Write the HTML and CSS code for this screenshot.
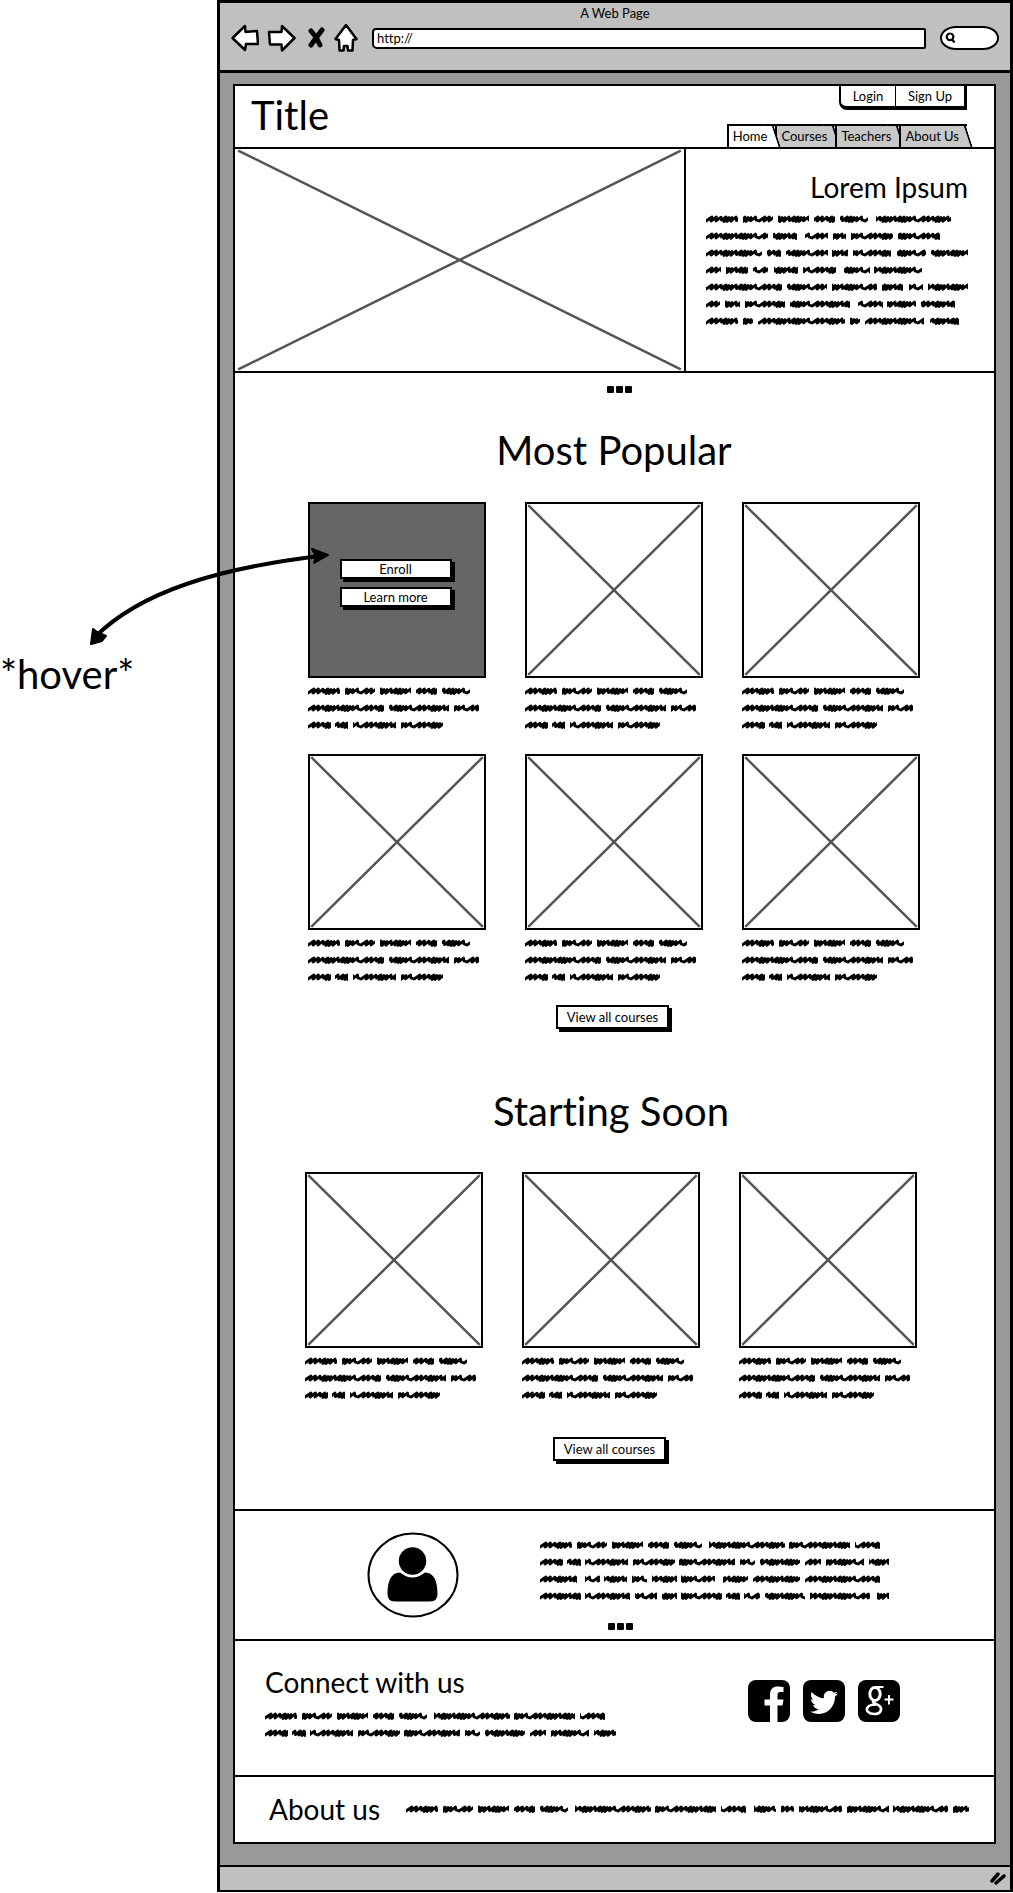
FILE: index.html
```html
<!DOCTYPE html>
<html lang="en">
<head>
<meta charset="utf-8">
<title>A Web Page</title>
<link rel="stylesheet" href="styles.css">
</head>
<body>
<svg class="sprite" width="0" height="0" aria-hidden="true">
  <defs>
    <pattern id="scribble" width="53" height="17" patternUnits="userSpaceOnUse">
      <path d="M-3 5L0 6L6 2L5 6L10.500 2L10 6L15 2.200L15.500 5L20 2L18 6.500L23 2.500L21 6.500L26 2.500L25 6.300L30 2L30.500 5.500L35.500 2L34 6L39 2L37 6.500L42 2.500L40 6.500L45 2.500L44.500 5.800L49.500 2L50 5L53 6L59 2" fill="none" stroke="#000" stroke-width="2.800" stroke-linejoin="round"/>
    </pattern>
    <symbol id="cross" viewBox="0 0 100 100" preserveAspectRatio="none">
      <path d="M0.700 0.700L99.300 99.300M99.300 0.700L0.700 99.300" stroke="#555" stroke-width="2.500" vector-effect="non-scaling-stroke"/>
    </symbol>
    <symbol id="card-text" viewBox="0 0 178 42">
      <path class="ink" d="M0 4h32M37 4h30M72 4h31M108 4h21M134 4h28M0 21h76M81 21h60M146 21h25M0 38h23M27 38h13M45 38h43M93 38h42"/>
    </symbol>
    <symbol id="dots" viewBox="0 0 26 8">
      <path d="M1 1h5v5h-5zM10 1h5v5h-5zM19 1h5v5h-5z" fill="#000" stroke="#000" stroke-width="2" stroke-linejoin="round"/>
    </symbol>
  </defs>
</svg>

<div class="board">
  <aside class="note">*hover*</aside>

  <div class="window">
    <div class="chrome">
      <div class="chrome-title">A Web Page</div>
      <div class="toolbar">
        <div class="nav-buttons">
          <button class="tool" aria-label="Back"><svg width="28" height="28" viewBox="0 0 28 28"><path d="M1.500 14L14 2L14.500 8L26 7L27 20L15 20L14 26Z"/></svg></button>
          <button class="tool" aria-label="Forward"><svg width="29" height="28" viewBox="0 0 29 28"><path d="M27.500 14L15 2L14.500 8L2 8L3 20.500L14.500 20.500L15 26.500Z"/></svg></button>
          <button class="tool" aria-label="Stop"><svg width="22" height="22" viewBox="0 0 22 22"><path class="thick" d="M7 4L12 10L16 18M18 3L12 11L7 18"/></svg></button>
          <button class="tool" aria-label="Home page"><svg width="24" height="30" viewBox="0 0 24 30"><path d="M12 2L1.500 16L5 17L5.500 27.500L9.500 27.500L10 23L13.500 23L14 27.500L18.500 27.500L19 17L22.500 16Z"/></svg></button>
        </div>
        <input class="address" type="text" value="http://" aria-label="Address">
        <label class="search">
          <svg width="11" height="12" viewBox="0 0 11 12" aria-hidden="true"><path d="M5 1.500a3.300 3.300 0 1 0 .1 0M7 7.500L9.500 10.500" fill="none" stroke="#000" stroke-width="2.200"/></svg>
          <input type="text" aria-label="Search">
        </label>
      </div>
    </div>

    <div class="viewport">
      <div class="page">
        <header class="site-header">
          <h1>Title</h1>
          <div class="header-side">
            <div class="account">
              <button>Login</button><button>Sign Up</button>
            </div>
            <nav class="tabs">
              <a class="tab current" href="#">Home</a>
              <a class="tab" href="#">Courses</a>
              <a class="tab" href="#">Teachers</a>
              <a class="tab" href="#">About Us</a>
            </nav>
          </div>
        </header>

        <section class="hero">
          <svg class="hero-image" role="img" aria-label="Image placeholder"><use href="#cross"/></svg>
          <div class="hero-text">
            <h3>Lorem Ipsum</h3>
            <svg width="262" height="110" viewBox="0 0 262 110" aria-hidden="true">
              <path class="ink" d="M0 4h32M37 4h30M72 4h31M108 4h21M134 4h28M170 4h75M0 21h62M67 21h24M99 21h23M127 21h13M145 21h42M192 21h42M0 38h56M61 38h14M80 38h42M126 38h16M147 38h38M191 38h29M225 38h37M0 55h15M20 55h22M47 55h15M68 55h24M97 55h33M138 55h26M168 55h48M0 72h76M81 72h40M126 72h45M176 72h21M203 72h14M222 72h40M0 89h14M19 89h15M39 89h40M84 89h60M152 89h25M181 89h29M215 89h34M0 106h32M37 106h10M52 106h87M144 106h10M159 106h59M224 106h29"/>
            </svg>
          </div>
        </section>

        <section class="courses">
          <svg class="dots" width="26" height="8" aria-hidden="true"><use href="#dots"/></svg>
          <h2>Most Popular</h2>
          <div class="grid">
            <article class="card">
              <div class="thumb active">
                <button class="button">Enroll</button>
                <button class="button">Learn more</button>
              </div>
              <svg width="178" height="42"><use href="#card-text"/></svg>
            </article>
            <article class="card"><svg class="thumb"><use href="#cross"/></svg><svg width="178" height="42"><use href="#card-text"/></svg></article>
            <article class="card"><svg class="thumb"><use href="#cross"/></svg><svg width="178" height="42"><use href="#card-text"/></svg></article>
            <article class="card"><svg class="thumb"><use href="#cross"/></svg><svg width="178" height="42"><use href="#card-text"/></svg></article>
            <article class="card"><svg class="thumb"><use href="#cross"/></svg><svg width="178" height="42"><use href="#card-text"/></svg></article>
            <article class="card"><svg class="thumb"><use href="#cross"/></svg><svg width="178" height="42"><use href="#card-text"/></svg></article>
          </div>
          <button class="button">View all courses</button>
        </section>

        <section class="courses soon">
          <h2>Starting Soon</h2>
          <div class="grid">
            <article class="card"><svg class="thumb"><use href="#cross"/></svg><svg width="178" height="42"><use href="#card-text"/></svg></article>
            <article class="card"><svg class="thumb"><use href="#cross"/></svg><svg width="178" height="42"><use href="#card-text"/></svg></article>
            <article class="card"><svg class="thumb"><use href="#cross"/></svg><svg width="178" height="42"><use href="#card-text"/></svg></article>
          </div>
          <button class="button">View all courses</button>
        </section>

        <section class="quote">
          <div class="quote-body">
            <svg width="92" height="86" viewBox="0 0 92 86" role="img" aria-label="User">
              <ellipse cx="46" cy="43" rx="44.500" ry="41.500" fill="#fff" stroke="#000" stroke-width="2"/>
              <circle cx="45.500" cy="29" r="13.700"/>
              <path d="M33 40.500C37 43.500 41 45.500 45.500 45.500S54 43.500 58 40.500C67 40.500 70.500 49 70.500 62Q70.500 69.500 63 69.500H28Q20.500 69.500 20.500 62C20.500 49 24 40.500 33 40.500Z"/>
            </svg>
            <svg class="quote-text" width="349" height="59" viewBox="0 0 349 59" aria-hidden="true">
              <path class="ink" d="M0 4h32M37 4h30M72 4h31M108 4h21M134 4h28M169 4h76M249 4h61M315 4h25M0 21h23M27 21h14M45 21h43M93 21h42M139 21h56M200 21h15M220 21h40M265 21h16M286 21h38M329 21h20M0 38h37M45 38h15M64 38h23M92 38h15M112 38h25M141 38h34M183 38h25M213 38h47M265 38h75M0 55h41M45 55h45M95 55h22M122 55h15M141 55h41M186 55h14M204 55h16M225 55h40M270 55h60M337 55h12"/>
            </svg>
          </div>
          <svg class="dots" width="26" height="8" aria-hidden="true"><use href="#dots"/></svg>
        </section>

        <section class="connect">
          <div>
            <h3>Connect with us</h3>
            <svg width="351" height="25" viewBox="0 0 351 25" aria-hidden="true">
              <path class="ink" d="M0 4h32M37 4h30M72 4h31M108 4h21M134 4h28M169 4h76M249 4h61M315 4h25M0 21h23M27 21h14M45 21h43M93 21h42M139 21h56M200 21h15M220 21h40M265 21h16M286 21h38M329 21h22"/>
            </svg>
          </div>
          <div class="social">
            <a href="#" aria-label="Facebook"><svg width="42" height="42" viewBox="0 0 42 42"><rect width="42" height="42" rx="8"/><path fill="#fff" d="M22 42V25.500H16.500V19.500H22V15C22 9 25 6.500 30 6.500C32 6.500 34 6.700 35.500 7V12H32.500C30 12 29.500 13.500 29.500 15.500V19.500H35.500L34.500 25.500H29.500V42Z"/></svg></a>
            <a href="#" aria-label="Twitter"><svg width="42" height="42" viewBox="0 0 42 42"><rect width="42" height="42" rx="8"/><path fill="#fff" d="M35 13.500C34 14 33 14.200 32 14.300C33 13.700 33.800 12.700 34.200 11.500C33.200 12.100 32.200 12.500 31 12.700A5.900 5.900 0 0 0 21 18.200C16 18 11.700 15.600 8.800 12C7.300 14.700 8 18 10.700 19.800C9.700 19.800 8.800 19.500 8 19.100C8 22 10 24.400 12.800 25C11.900 25.200 11 25.200 10.100 25.100C10.900 27.500 13 29.100 15.600 29.200C13.200 31 10 32 7 31.600C9.600 33.200 12.500 34 15.700 34C26 34 32.200 25.200 32 16.500C33.200 15.700 34.200 14.700 35 13.500Z"/></svg></a>
            <a href="#" aria-label="Google Plus"><svg width="42" height="42" viewBox="0 0 42 42"><rect width="42" height="42" rx="8"/><g fill="none" stroke="#fff"><ellipse cx="17" cy="14" rx="5.200" ry="6.500" stroke-width="3"/><path d="M18 7H25.500" stroke-width="2"/><path d="M15.500 20.500C13.500 23 18 23.500 21 25.500C25 28.500 23 34 16.500 34C10.500 34 7.500 30.500 9.500 27.500C11 25 15 24.500 18 24.500" stroke-width="2.600"/><path d="M26.500 19.500H35.500M31 15V24.500" stroke-width="2"/></g></svg></a>
          </div>
        </section>

        <footer class="about">
          <h3>About us</h3>
          <svg width="563" height="8" viewBox="0 0 563 8" aria-hidden="true">
            <path class="ink" d="M0 4h32M37 4h30M72 4h31M108 4h21M134 4h28M169 4h76M249 4h61M315 4h25M348 4h22M375 4h13M393 4h43M441 4h42M487 4h55M547 4h16"/>
          </svg>
        </footer>
      </div>
    </div>

    <div class="status">
      <svg width="17" height="15" viewBox="0 0 17 15" aria-hidden="true"><path d="M2 10L8 3M6 12L14 5" stroke="#000" stroke-width="3.500" stroke-linecap="round"/></svg>
    </div>
  </div>

  <svg class="arrow" width="250" height="100" viewBox="0 0 250 100" aria-hidden="true">
    <path d="M15 89C61 43 140 20 240 8" fill="none" stroke="#000" stroke-width="4"/>
    <path d="M11 96L13 81L17 84L26 88L22 93ZM248 7L232 1L236 8L234 15Z" stroke="#000" stroke-width="2" stroke-linejoin="round"/>
  </svg>
</div>
</body>
</html>
```
FILE: styles.css
```css
* {
  box-sizing: border-box;
}

body {
  margin: 0;
  background: #fff;
  color: #000;
  font-family: Lato, "Open Sans", sans-serif;
  font-size: 13px;
  font-variant-ligatures: none;
  line-height: 20px;
}

button,
input {
  margin: 0;
  padding: 0;
  border: 0;
  background: none;
  color: inherit;
  font: inherit;
}

a {
  color: inherit;
  text-decoration: none;
}

svg {
  display: block;
}

h1,
h2,
h3 {
  margin: 0;
  font-weight: 400;
}

h1,
h2,
.note {
  font-size: 40px;
  line-height: 48px;
}

h3 {
  font-size: 28px;
  line-height: 32px;
}

.sprite {
  position: absolute;
}

.ink {
  fill: none;
  stroke: url(#scribble);
  stroke-width: 8px;
}

.board {
  position: relative;
  display: grid;
  grid-template-columns: 217px 1fr;
  padding-bottom: 2px;
}

.note {
  padding-top: 650px;
}

.arrow {
  position: absolute;
  top: 548px;
  left: 80px;
}

.window {
  border: 3px solid #000;
  border-bottom-width: 2px;
  background: #999;
}

/* Browser chrome */
.chrome {
  padding-bottom: 17px;
  border-bottom: 3px solid #000;
  background: #c0c0c0;
}

.chrome-title {
  text-align: center;
}

.toolbar {
  display: flex;
  align-items: center;
  gap: 14px;
  height: 30px;
  padding: 0 11px;
}

.nav-buttons {
  display: flex;
  align-items: center;
  gap: 8px;
}

.tool svg {
  fill: #fff;
  stroke: #000;
  stroke-width: 2.5px;
  stroke-linejoin: round;
  stroke-linecap: round;
}

.tool .thick {
  fill: none;
  stroke-width: 5px;
}

.address {
  flex: 1;
  min-width: 0;
  height: 21px;
  padding: 0 3px;
  border: 2px solid #000;
  border-radius: 4px 2px 2px 5px;
  background: #fff;
}

.search {
  display: flex;
  align-items: center;
  width: 59px;
  height: 24px;
  padding-left: 3px;
  border: 2px solid #000;
  border-radius: 16px / 12px;
  background: #fff;
}

.search input {
  width: 38px;
}

/* Page */
.viewport {
  padding: 11px 14px 21px 13px;
}

.page {
  border: 2px solid #000;
  background: #fff;
}

.site-header {
  display: flex;
  justify-content: space-between;
  padding: 0 27px 0 16px;
  border-bottom: 2px solid #000;
}

.site-header h1 {
  padding-top: 5px;
}

.header-side {
  display: flex;
  flex-direction: column;
  justify-content: space-between;
  align-items: flex-end;
  height: 61px;
}

.account {
  display: flex;
  border: 2px solid #000;
  border-width: 0 3px 4px 2px;
  border-radius: 0 0 0 8px;
}

.account button {
  width: 68px;
  line-height: 20px;
}

.account button:first-child {
  width: 55px;
  border-right: 1px solid #000;
}

.tabs {
  display: flex;
}

.tab {
  position: relative;
  z-index: 1;
  padding: 0 8px 0 4px;
  border: 2px solid #000;
  border-width: 2px 0 0 2px;
  background: #c8c8c8;
  line-height: 21px;
}

/* Slanted right edge of a tab */
.tab::after {
  content: "";
  position: absolute;
  z-index: -1;
  top: -2px;
  right: -2px;
  bottom: 0;
  width: 8px;
  border: 2px solid #000;
  border-width: 2px 2px 0 0;
  border-radius: 0 3px 0 0;
  background: inherit;
  transform: skewX(18deg);
}

.current {
  z-index: 2;
  background: #fff;
}

.hero {
  display: grid;
  grid-template-columns: 1fr auto;
  min-height: 224px;
  border-bottom: 2px solid #000;
}

.hero-image {
  width: 100%;
  height: 100%;
  border-right: 2px solid #000;
}

.hero-text {
  padding: 22px 26px 0 20px;
}

.hero-text h3 {
  margin-bottom: 12px;
  text-align: right;
}

.courses {
  display: flex;
  flex-direction: column;
  align-items: center;
  padding: 13px 74px 0 73px;
}

.dots {
  align-self: center;
  margin-left: 12px;
}

.courses h2 {
  padding: 32px 0 28px;
}

.grid {
  display: grid;
  grid-template-columns: repeat(3, 1fr);
  gap: 25px 39px;
  width: 100%;
  margin-bottom: 24px;
}

.card {
  display: flex;
  flex-direction: column;
  gap: 9px;
}

.thumb {
  width: 100%;
  height: 176px;
  border: 2px solid #000;
}

.active {
  display: flex;
  flex-direction: column;
  align-items: center;
  justify-content: center;
  gap: 8px;
  padding: 0 31px 14px;
  background: #666;
}

.button {
  height: 24px;
  margin-right: 3px;
  padding: 0 9px;
  border: 2px solid #000;
  background: #fff;
  box-shadow: 3px 3px 0 #000;
  line-height: 18px;
}

.active .button {
  width: 100%;
  height: 20px;
  line-height: 16px;
}

.soon {
  padding: 26px 77px 48px 70px;
}

.soon h2 {
  padding-bottom: 37px;
}

.soon .grid {
  margin-bottom: 38px;
}

.quote {
  display: flex;
  flex-direction: column;
  gap: 5px;
  padding: 21px 0 8px;
  border-top: 2px solid #000;
}

.quote-body {
  display: flex;
  justify-content: center;
  gap: 81px;
  padding-left: 26px;
}

.quote-text {
  margin-top: 9px;
}

.connect {
  display: flex;
  justify-content: space-between;
  align-items: center;
  min-height: 136px;
  padding: 0 94px 14px 30px;
  border-top: 2px solid #000;
}

.connect h3 {
  margin-bottom: 14px;
}

.social {
  display: flex;
  gap: 13px;
}

.about {
  display: flex;
  align-items: center;
  justify-content: space-between;
  min-height: 67px;
  padding: 0 25px 2px 34px;
  border-top: 2px solid #000;
}

.status {
  display: flex;
  align-items: center;
  justify-content: flex-end;
  height: 25px;
  padding-right: 3px;
  border-top: 2px solid #000;
  background: #c0c0c0;
}
```
